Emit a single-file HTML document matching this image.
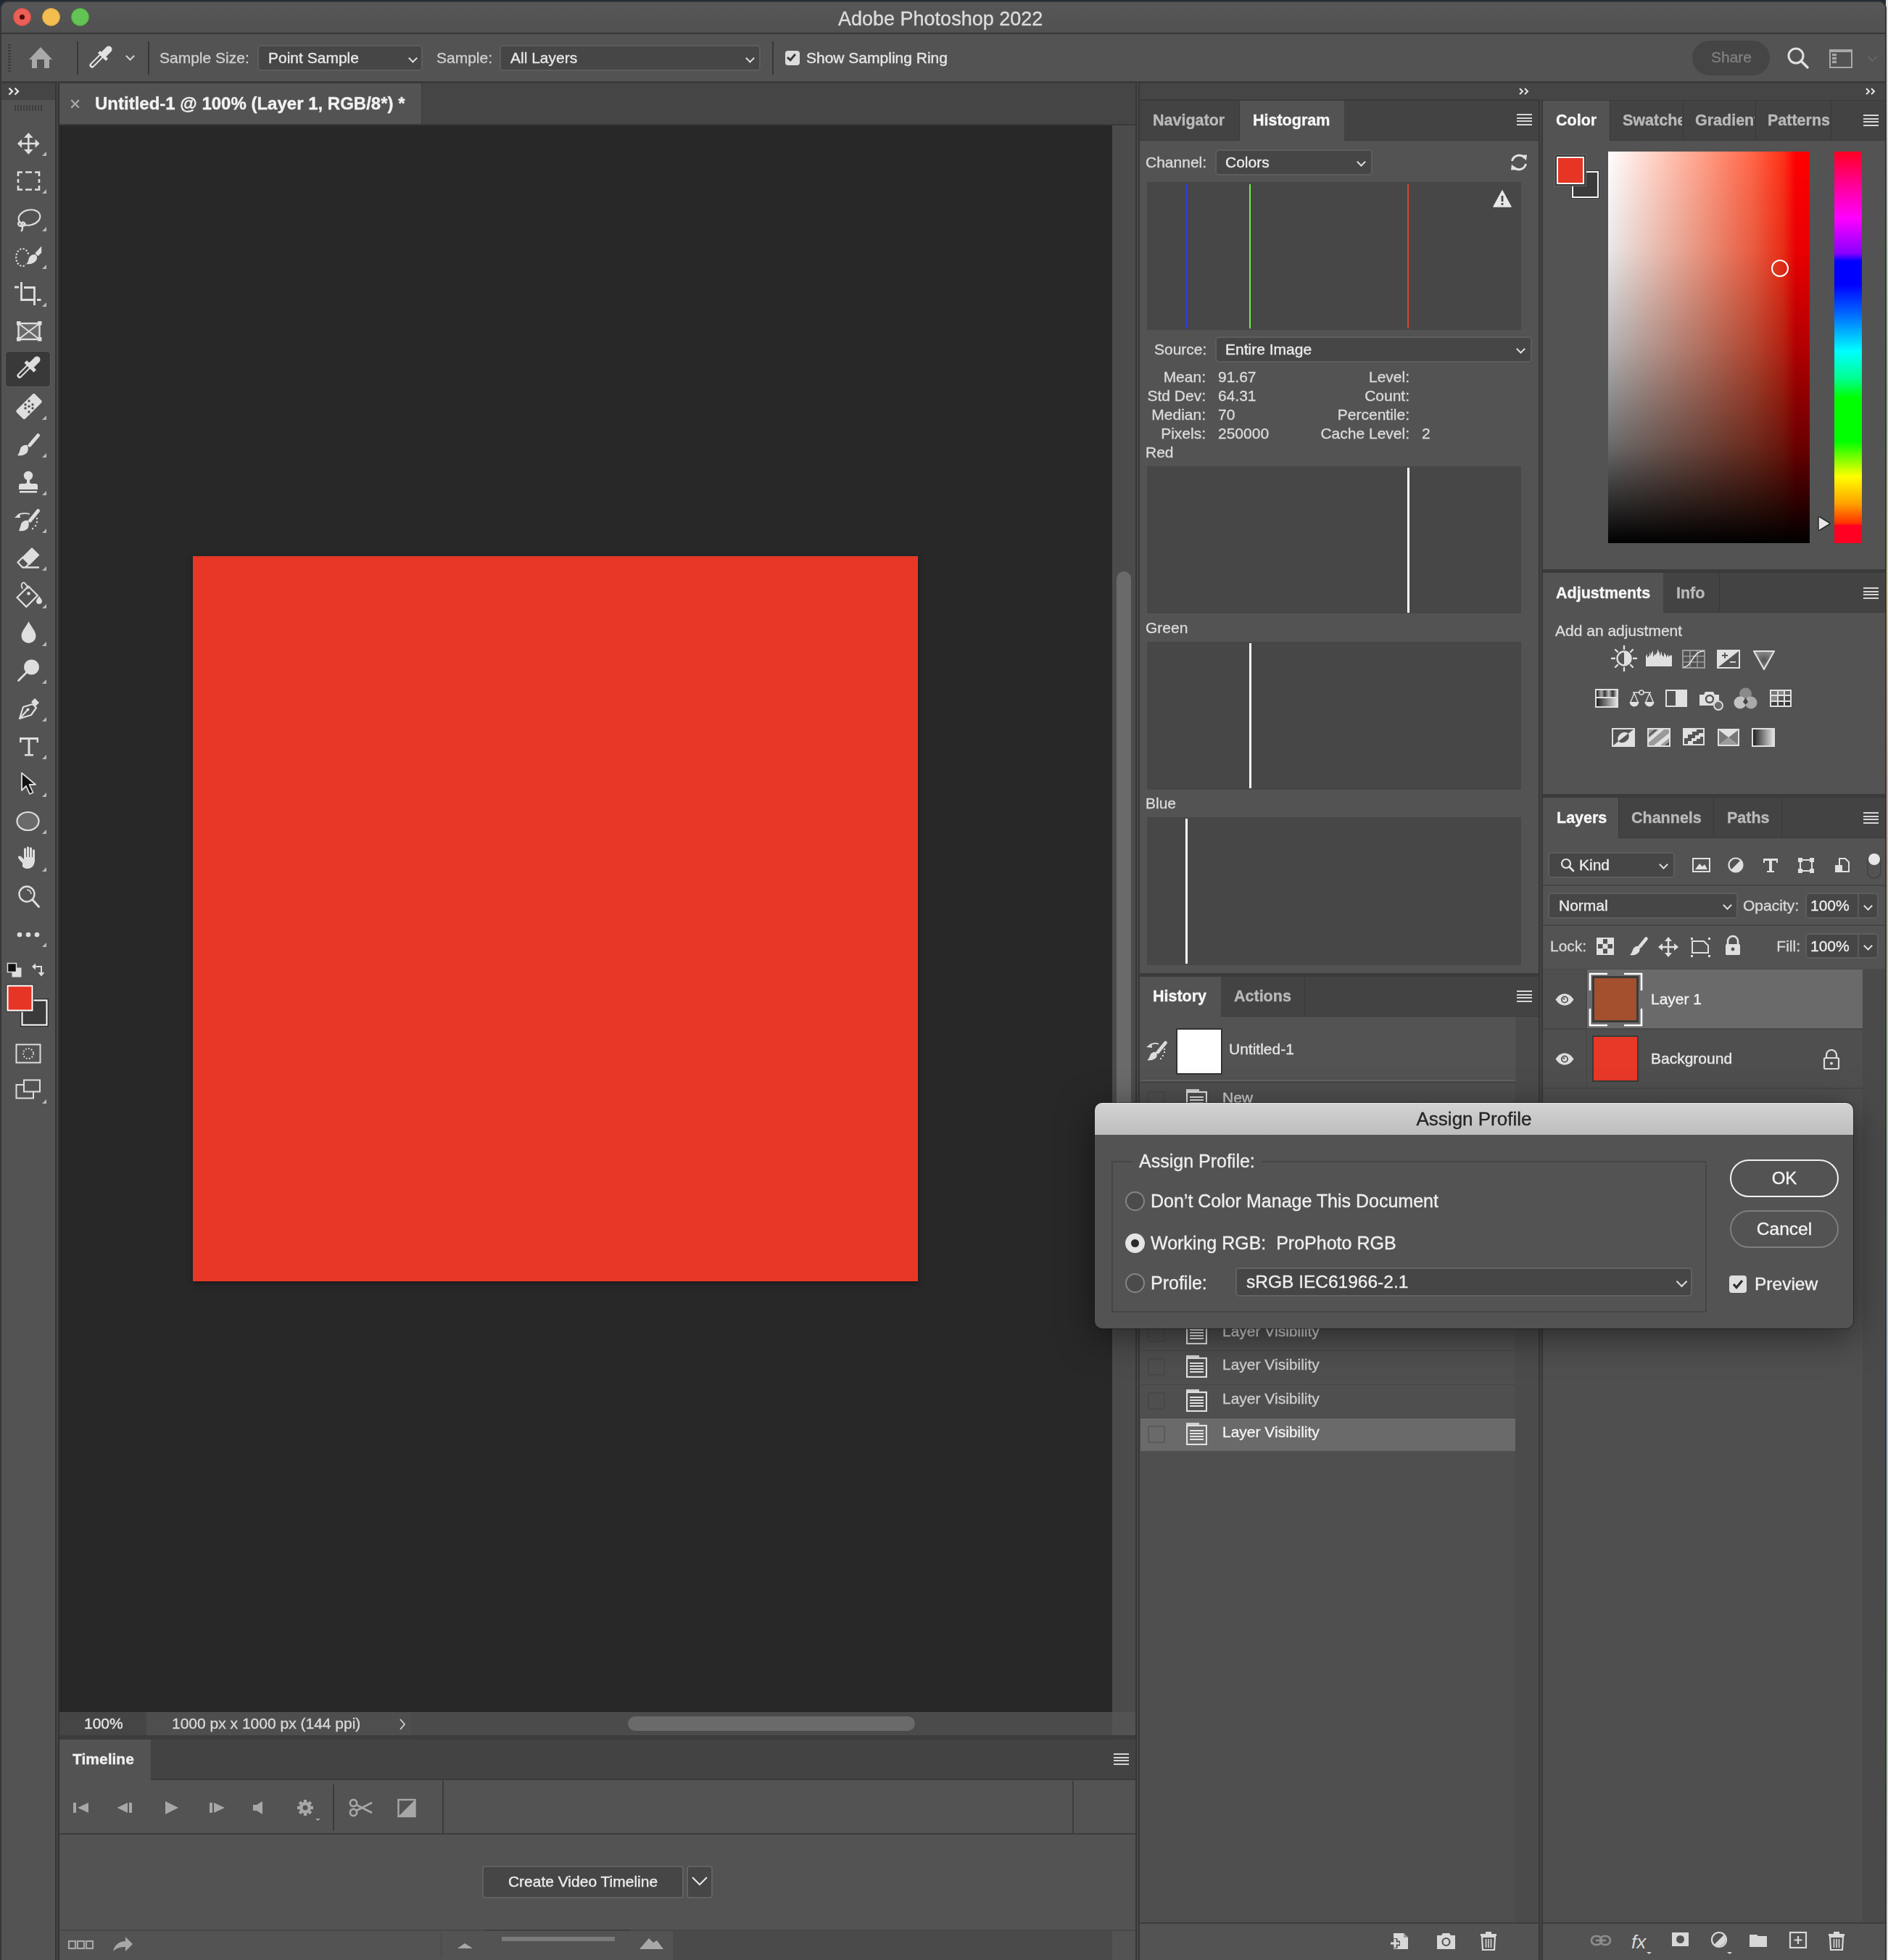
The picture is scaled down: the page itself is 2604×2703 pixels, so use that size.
<!DOCTYPE html>
<html><head><meta charset="utf-8">
<style>
*{margin:0;padding:0;box-sizing:border-box}
html,body{width:2604px;height:2703px;overflow:hidden;background:#1c2833}
body{position:relative;font-family:"Liberation Sans",sans-serif;color:#e4e4e4}
.a{position:absolute}
.t{position:absolute;white-space:nowrap;height:30px;line-height:30px;font-size:21px;will-change:transform;-webkit-text-stroke:0.35px currentColor}
.b{font-weight:bold}
.dd{position:absolute;background:#464646;border:2px solid #5d5d5d;border-radius:5px}
.chev{position:absolute;width:11px;height:11px;border-right:2.5px solid #e0e0e0;border-bottom:2.5px solid #e0e0e0;transform:rotate(45deg)}
.ham{position:absolute;width:30px;height:22px;background:repeating-linear-gradient(#cfcfcf 0 2px,transparent 2px 5px)}
.sep{position:absolute;background:#383838}
</style></head><body>
<div class="a" style="left:2601px;top:0;width:3px;height:2703px;background:linear-gradient(#e8e8e8 0%,#9fc79a 20%,#d9d08a 30%,#cfa3a0 40%,#9fc79a 55%,#a9bde0 70%,#9fc79a 85%,#dddddd 100%)"></div>
<div id="win" class="a" style="left:0;top:1px;width:2602px;height:2702px;background:#535353;border-radius:11px 11px 0 0;overflow:hidden;border:2px solid #373737;border-bottom:none">
<div class="a" style="left:-2px;top:-3px;width:2604px;height:2706px">

<!-- title bar -->
<div class="a" style="left:0;top:0;width:2604px;height:47px;background:linear-gradient(#575757,#515151);border-bottom:2px solid #363636"></div>
<div class="a" style="left:18px;top:11px;width:25px;height:25px;border-radius:50%;background:#ec5f57;border:1px solid #d44d45"></div>
<div class="a" style="left:27px;top:20px;width:7px;height:7px;border-radius:50%;background:#4d0c08"></div>
<div class="a" style="left:58px;top:11px;width:25px;height:25px;border-radius:50%;background:#f3bd4f;border:1px solid #d9a33b"></div>
<div class="a" style="left:98px;top:11px;width:25px;height:25px;border-radius:50%;background:#62c454;border:1px solid #4fa940"></div>
<div class="t" style="left:1156px;top:11px;font-size:27px;color:#dcdcdc">Adobe Photoshop 2022</div>

<!-- options bar -->
<div class="a" style="left:0;top:47px;width:2604px;height:65px;background:#535353"></div>
<div class="sep" style="left:0;top:112px;width:2601px;height:3px;background:#3a3a3a"></div>

<!-- left toolbar -->
<div class="a" style="left:0;top:115px;width:76px;height:2588px;background:#535353"></div>
<div class="a" style="left:0;top:115px;width:76px;height:23px;background:#454545"></div>
<div class="sep" style="left:76px;top:115px;width:6px;height:2588px;background:#383838;border-left:2px solid #363636;border-right:2px solid #333"></div><div class="sep" style="left:78px;top:115px;width:2px;height:2588px;background:#474747"></div>

<!-- document tab bar -->
<div class="a" style="left:82px;top:115px;width:1484px;height:56px;background:#454545"></div>
<div class="a" style="left:82px;top:115px;width:500px;height:56px;background:#535353;border-right:1px solid #3d3d3d"></div>
<div class="sep" style="left:82px;top:171px;width:1484px;height:2px;background:#393939"></div>
<!-- canvas -->
<div class="a" style="left:82px;top:173px;width:1452px;height:2188px;background:#282828"></div>
<div class="a" style="left:266px;top:767px;width:1000px;height:1000px;background:#e83726;box-shadow:0 3px 8px rgba(0,0,0,.35)"></div>
<!-- v scrollbar -->
<div class="a" style="left:1534px;top:173px;width:32px;height:2188px;background:#4b4b4b"></div>
<div class="a" style="left:1540px;top:788px;width:20px;height:912px;background:#6a6a6a;border-radius:10px"></div>
<!-- status bar -->
<div class="a" style="left:82px;top:2361px;width:1484px;height:32px;background:#4b4b4b"></div>
<div class="a" style="left:82px;top:2361px;width:120px;height:32px;background:#454545"></div>
<div class="a" style="left:202px;top:2361px;width:365px;height:32px;background:#4e4e4e"></div>
<div class="a" style="left:1534px;top:2361px;width:32px;height:32px;background:#535353"></div>
<div class="a" style="left:866px;top:2367px;width:396px;height:20px;background:#6a6a6a;border-radius:10px"></div>
<div class="sep" style="left:82px;top:2393px;width:1484px;height:6px;background:#3c3c3c"></div>

<!-- timeline -->
<div class="a" style="left:82px;top:2399px;width:1484px;height:55px;background:#434343"></div>
<div class="a" style="left:82px;top:2399px;width:126px;height:56px;background:#535353"></div>
<div class="sep" style="left:208px;top:2453px;width:1358px;height:2px;background:#3a3a3a"></div>
<div class="sep" style="left:82px;top:2528px;width:1484px;height:2px;background:#3d3d3d"></div>
<div class="a" style="left:928px;top:2662px;width:606px;height:41px;background:#4a4a4a"></div>
<div class="sep" style="left:82px;top:2661px;width:1484px;height:2px;background:#474747"></div>

<!-- divider between doc and panels -->
<div class="sep" style="left:1566px;top:115px;width:6px;height:2588px;background:#383838"></div><div class="sep" style="left:1568px;top:115px;width:2px;height:2588px;background:#474747"></div>

<!-- panel column 1 -->
<div class="a" style="left:1572px;top:115px;width:552px;height:23px;background:#454545"></div>

<div class="a" style="left:1572px;top:139px;width:552px;height:55px;background:#434343"></div>
<div class="a" style="left:1710px;top:139px;width:144px;height:55px;background:#535353"></div>
<div class="sep" style="left:1709px;top:139px;width:1px;height:55px;background:#3a3a3a"></div>
<div class="sep" style="left:1572px;top:1342px;width:552px;height:5px;background:#3b3b3b"></div>
<div class="a" style="left:1572px;top:1347px;width:552px;height:55px;background:#434343"></div>
<div class="a" style="left:1572px;top:1347px;width:112px;height:55px;background:#535353"></div>
<div class="sep" style="left:1799px;top:1347px;width:1px;height:55px;background:#3a3a3a"></div>
<div class="a" style="left:1572px;top:1491px;width:518px;height:1160px;background:#4f4f4f"></div>
<div class="a" style="left:2090px;top:1402px;width:32px;height:1249px;background:#4b4b4b"></div>
<div class="sep" style="left:1572px;top:2651px;width:552px;height:2px;background:#3d3d3d"></div>

<div class="sep" style="left:2122px;top:138px;width:6px;height:2565px;background:#383838"></div><div class="sep" style="left:2124px;top:138px;width:2px;height:2565px;background:#474747"></div>
<div class="sep" style="left:1572px;top:137px;width:1029px;height:2px;background:#3a3a3a"></div>

<!-- panel column 2 -->
<div class="a" style="left:2124px;top:115px;width:477px;height:23px;background:#454545"></div>

<div class="a" style="left:2128px;top:139px;width:473px;height:55px;background:#434343"></div>
<div class="a" style="left:2128px;top:139px;width:92px;height:55px;background:#535353"></div>
<div class="sep" style="left:2128px;top:785px;width:473px;height:5px;background:#3b3b3b"></div>
<div class="a" style="left:2128px;top:790px;width:473px;height:55px;background:#434343"></div>
<div class="a" style="left:2128px;top:790px;width:166px;height:55px;background:#535353"></div>
<div class="sep" style="left:2128px;top:1095px;width:473px;height:5px;background:#3b3b3b"></div>
<div class="a" style="left:2128px;top:1100px;width:473px;height:56px;background:#434343"></div>
<div class="a" style="left:2128px;top:1100px;width:104px;height:56px;background:#535353"></div>
<div class="a" style="left:2128px;top:1336px;width:441px;height:1315px;background:#4f4f4f"></div>
<div class="a" style="left:2569px;top:1336px;width:32px;height:1315px;background:#4a4a4a"></div>
<div class="sep" style="left:2128px;top:2651px;width:473px;height:2px;background:#3d3d3d"></div>

<!-- CONTENT -->
<div class="sep" style="left:1572px;top:193px;width:138px;height:1px;background:#3a3a3a"></div>
<div class="sep" style="left:1854px;top:193px;width:268px;height:1px;background:#3a3a3a"></div>
<div class="sep" style="left:1684px;top:1401px;width:438px;height:1px;background:#3a3a3a"></div>
<div class="sep" style="left:2220px;top:193px;width:381px;height:1px;background:#3a3a3a"></div>
<div class="sep" style="left:2294px;top:844px;width:307px;height:1px;background:#3a3a3a"></div>
<div class="sep" style="left:2232px;top:1155px;width:369px;height:1px;background:#3a3a3a"></div>


<!-- ===== options bar content ===== -->
<div class="a" style="left:11px;top:61px;width:4px;height:38px;background:repeating-linear-gradient(#3c3c3c 0 2px,transparent 2px 4px)"></div>
<svg class="a" style="left:40px;top:65px" width="32" height="30" viewBox="0 0 32 30"><path d="M0 17 L16 0 L32 17 L28 17 L28 29 L21 29 L21 17 L11 17 L11 29 L4 29 L4 17 Z" fill="#a9a9a9"/></svg>
<div class="sep" style="left:106px;top:57px;width:2px;height:46px"></div>
<svg class="a" style="left:123px;top:63px" width="34" height="33" viewBox="0 0 34 33"><path d="M4 27 L20 11" stroke="#e2e2e2" stroke-width="7" stroke-linecap="round"/><path d="M4.5 26.5 L19 12" stroke="#535353" stroke-width="3" stroke-linecap="round"/><path d="M15 7 L26 18 L23 21 L12 10 Z" fill="#e2e2e2"/><path d="M20 12 L27 5" stroke="#e2e2e2" stroke-width="9" stroke-linecap="round"/></svg>
<div class="chev" style="left:175px;top:73px;width:9px;height:9px;border-width:2px;border-color:#d5d5d5"></div>
<div class="sep" style="left:204px;top:57px;width:2px;height:46px"></div>
<div class="t" style="left:220px;top:65px;font-size:21px;color:#cfcfcf">Sample Size:</div>
<div class="dd" style="left:355px;top:62px;width:228px;height:36px"></div>
<div class="t" style="left:370px;top:65px;font-size:21px;color:#e8e8e8">Point Sample</div>
<div class="chev" style="left:565px;top:76px;width:9px;height:9px;border-width:2px"></div>
<div class="t" style="left:602px;top:65px;font-size:21px;color:#cfcfcf">Sample:</div>
<div class="dd" style="left:689px;top:62px;width:360px;height:36px"></div>
<div class="t" style="left:704px;top:65px;font-size:21px;color:#e8e8e8">All Layers</div>
<div class="chev" style="left:1030px;top:76px;width:9px;height:9px;border-width:2px"></div>
<div class="sep" style="left:1065px;top:57px;width:2px;height:46px"></div>
<div class="a" style="left:1083px;top:70px;width:20px;height:20px;background:#dcdcdc;border-radius:4px"></div>
<div class="a" style="left:1088px;top:72px;width:7px;height:12px;border-right:3px solid #3a3a3a;border-bottom:3px solid #3a3a3a;transform:rotate(40deg)"></div>
<div class="t" style="left:1112px;top:65px;font-size:21px;color:#e8e8e8">Show Sampling Ring</div>
<div class="a" style="left:2334px;top:56px;width:107px;height:48px;border-radius:24px;background:#454545"></div>
<div class="t" style="left:2360px;top:64px;font-size:21px;color:#808080">Share</div>
<svg class="a" style="left:2464px;top:64px" width="32" height="32" viewBox="0 0 32 32"><circle cx="13" cy="13" r="10" fill="none" stroke="#e0e0e0" stroke-width="3"/><path d="M20 20 L29 29" stroke="#e0e0e0" stroke-width="3.5" stroke-linecap="round"/></svg>
<div class="a" style="left:2523px;top:68px;width:32px;height:26px;border:2px solid #a8a8a8;border-top-width:4px"></div>
<div class="a" style="left:2527px;top:74px;width:6px;height:14px;background:repeating-linear-gradient(#a8a8a8 0 3px,#606060 3px 5px)"></div>
<div class="chev" style="left:2578px;top:74px;width:9px;height:9px;border-width:1.5px;border-color:#777"></div>

<!-- ===== toolbar header / doc tab ===== -->

<div class="a" style="left:20px;top:145px;width:38px;height:8px;background:repeating-linear-gradient(90deg,#3e3e3e 0 2px,transparent 2px 4px)"></div>
<div class="t" style="left:96px;top:128px;font-size:26px;color:#aaaaaa">&#215;</div>
<div class="t b" style="left:131px;top:128px;font-size:24px;color:#f2f2f2">Untitled-1 @ 100% (Layer 1, RGB/8*) *</div>

<!-- toolbar icons -->
<svg class="a" style="left:0;top:0" width="80" height="1530" viewBox="0 0 80 1530">
<g fill="#b9b9b9">
<path d="M58 215H64V209Z"/><path d="M58 267H64V261Z"/><path d="M58 319H64V313Z"/><path d="M58 371H64V365Z"/><path d="M58 423H64V417Z"/>
<path d="M58 527H64V521Z"/><path d="M58 579H64V573Z"/><path d="M58 631H64V625Z"/><path d="M58 683H64V677Z"/><path d="M58 735H64V729Z"/>
<path d="M58 787H64V781Z"/><path d="M58 839H64V833Z"/><path d="M58 891H64V885Z"/><path d="M58 943H64V937Z"/><path d="M58 995H64V989Z"/>
<path d="M58 1047H64V1041Z"/><path d="M58 1099H64V1093Z"/><path d="M58 1150H64V1144Z"/><path d="M58 1202H64V1196Z"/><path d="M58 1306H64V1300Z"/><path d="M58 1522H64V1516Z"/>
</g>
<g fill="#dedede" stroke="none">
<!-- move -->
<path d="M38 186h2.6v24h-2.6z M27 196.7h24v2.6h-24z"/>
<path d="M33 190L39.3 183L45.6 190Z M33 206L39.3 213L45.6 206Z M30 192L24 198L30 204Z M48.6 192L54.6 198L48.6 204Z"/>
</g>
<g fill="none" stroke="#dedede" stroke-width="2.6">
<!-- marquee -->
<path d="M25 243V237.5H31 M35 237.5H44 M48 237.5H54V243 M54 247V252 M54 256V261.5H48 M44 261.5H35 M31 261.5H25V256 M25 252V247"/>
<!-- lasso -->
<ellipse cx="40.5" cy="300" rx="15" ry="10.5" transform="rotate(-12 40.5 300)" stroke-width="2.2"/>
<path d="M28 305c-5 3-3 7 2 7c5 0 6-3 3-5c-3-2-5 2-3 5c2 3 1 5-1 7" stroke-width="2.2"/>
<!-- quick select dotted -->
<clipPath id="qsClip"><path d="M15 335H45V351H35.5V372H15Z"/></clipPath><ellipse cx="31" cy="355" rx="8.8" ry="12" stroke-dasharray="2.2 2.3" stroke-width="2.2" clip-path="url(#qsClip)"/>
<!-- crop -->
<path d="M20 396H26 M29.5 389V413.5H47 M33 396.5H47.5V421 M51 413.5H56.5" stroke-width="2.8"/>
<!-- frame -->
<rect x="25.5" y="446" width="29" height="22" fill="#6a6a6a" stroke-width="2.4"/>
<path d="M25.5 446L54.5 468M54.5 446L25.5 468" stroke-width="2"/>
</g>
<g fill="#dedede">
<rect x="23" y="443" width="5.5" height="5.5"/><rect x="52" y="443" width="5.5" height="5.5"/><rect x="23" y="465" width="5.5" height="5.5"/><rect x="52" y="465" width="5.5" height="5.5"/>
<!-- quick select brush -->
<path d="M57.2 339.5V348.5L52.5 353.2L48.3 349.3Z"/><path d="M49.5 351.5C45 350 40.5 353 39.5 357.5C39 360.5 38 362.5 36.3 364.2C42 365 48 362.5 50.3 358.5C51.5 356 51.5 353.5 49.5 351.5Z"/>
</g>
<!-- eyedropper selected bg -->
<rect x="7.5" y="484.5" width="62" height="49" rx="5" fill="#393939" stroke="#5c5c5c" stroke-width="1"/>
<g>
<path d="M27 518L42 503" stroke="#dedede" stroke-width="7" stroke-linecap="round"/>
<path d="M27.5 517.5L41.5 503.5" stroke="#393939" stroke-width="3" stroke-linecap="round"/>
<path d="M37 497L50 510L46.5 513.5L33.5 500.5Z" fill="#dedede"/>
<path d="M43 504L51 496" stroke="#dedede" stroke-width="9" stroke-linecap="round"/>
</g>
<g fill="#dedede">
<!-- healing -->
<g transform="rotate(-45 40 560.5)"><rect x="22" y="552" width="36" height="17" rx="3"/></g>
<g fill="#535353"><circle cx="35" cy="558" r="1.7"/><circle cx="40" cy="553" r="1.7"/><circle cx="45" cy="558" r="1.7"/><circle cx="35" cy="563" r="1.7"/><circle cx="40" cy="568" r="1.7"/><circle cx="45" cy="563" r="1.7"/><circle cx="40" cy="560.5" r="1.7"/></g>
<!-- brush -->
<path d="M52.5 600.5L41 614" stroke="#dedede" stroke-width="5" stroke-linecap="round"/>
<path d="M38 614c-4-1-9 1-10 5c-1 4-2 7-4 9c6 1 12-1 14-5c1-2 1-6 0-9z"/>
<!-- stamp -->
<circle cx="39" cy="656" r="6.2"/>
<path d="M37 661h4v4c0 1 1 2 3 2h5c2 0 3 1 3 3v5h-26v-5c0-2 1-3 3-3h5c2 0 3-1 3-2z"/>
<rect x="27" y="677" width="24" height="2.6"/>
<!-- history brush -->
<path d="M52.5 704.5L41.5 718" stroke="#dedede" stroke-width="5" stroke-linecap="round"/>
<path d="M39 718c-4-1-9 1-10 5c-1 4-2 6-3 9c6 1 12-1 13-5c1-2 1-6 0-9z"/>
<path d="M20 714L27 708L28 714Z"/>
<path d="M24 711c4-3 10-4 17-2" stroke="#dedede" stroke-width="1.8" fill="none"/>
<circle cx="51" cy="715" r="1.2"/><circle cx="51" cy="720" r="1.2"/><circle cx="49" cy="725" r="1.2"/><circle cx="45" cy="729" r="1.2"/>
</g>
<!-- eraser -->
<path d="M44 756L53.5 765.5L40.5 778.5L31 769Z" fill="#dedede" stroke="#dedede" stroke-width="1.5" stroke-linejoin="round"/>
<path d="M32 768L24.5 775.5L31 782.5H54M35 782.5L41 776.5" fill="none" stroke="#dedede" stroke-width="2.3" stroke-linejoin="round"/>
<!-- bucket -->
<g transform="rotate(-45 37 822)"><rect x="26" y="814" width="22" height="18" fill="none" stroke="#dedede" stroke-width="2.2"/></g>
<path d="M31 812c-3-6 0-10 3-8c2 2 4 5 5 8" fill="none" stroke="#dedede" stroke-width="1.8"/>
<circle cx="39.5" cy="818.5" r="2.3" fill="#dedede"/>
<path d="M54 822c2 3 4 5 4 7a4 4 0 0 1-8 0c0-2 2-4 4-7z" fill="#dedede"/>
<!-- blur drop -->
<path d="M39.5 857c3 7 10 13 10 20a10 10 0 0 1-20 0c0-7 7-13 10-20z" fill="#dedede"/>
<!-- dodge -->
<circle cx="43.5" cy="920" r="10.5" fill="#dedede"/>
<path d="M37 927L25.5 938.5" stroke="#dedede" stroke-width="2.8" stroke-linecap="round"/>
<!-- pen -->
<g fill="none" stroke="#dedede" stroke-width="2.2" stroke-linejoin="round">
<path d="M45 971L50 976L43 986L27 991L32 975Z"/>
<path d="M28 990L38 979"/>
</g>
<path d="M43 968L48 963L54 969L49 974Z" fill="#dedede"/>
<circle cx="38.5" cy="978.5" r="2" fill="#dedede"/>
<!-- type -->
<path d="M27 1017H53V1024H50.5V1020H41.5V1040H46V1042.6H34V1040H38.5V1020H29.5V1024H27Z" fill="#dedede"/>
<!-- path selection -->
<path d="M30 1066L30 1090L36 1084L41 1095L45.5 1093L40.5 1082L49 1082Z" fill="#111" stroke="#dedede" stroke-width="1.8" stroke-linejoin="round"/>
<!-- ellipse -->
<ellipse cx="38.5" cy="1132.5" rx="15" ry="12.5" fill="#6a6a6a" stroke="#dedede" stroke-width="2.2"/>
<!-- hand -->
<path d="M31 1190c-3-3-6-6-6-8c0-2 3-2 5 0l3 3v-14c0-2 3-2 3 0v11h1v-13c0-2 3-2 3 0v13h1v-12c0-2 3-2 3 0v12h1v-9c0-2 3-2 3 0v13c0 7-4 12-10 12c-4 0-6-2-7-3z" fill="#dedede"/>
<!-- zoom -->
<circle cx="37" cy="1233" r="10.5" fill="none" stroke="#dedede" stroke-width="2.4"/>
<path d="M37 1227a6 6 0 0 1 6 6" fill="none" stroke="#dedede" stroke-width="1.6"/>
<path d="M45 1241L53.5 1250.5" stroke="#dedede" stroke-width="3" stroke-linecap="round"/>
<!-- dots -->
<g fill="#dedede"><circle cx="27" cy="1289" r="3.3"/><circle cx="39" cy="1289" r="3.3"/><circle cx="51" cy="1289" r="3.3"/></g>
<!-- small fg/bg -->
<rect x="16.5" y="1334.5" width="13" height="13" fill="#dedede"/>
<rect x="10.5" y="1328.5" width="12" height="12" fill="#111" stroke="#dedede" stroke-width="1.5"/>
<!-- swap -->
<path d="M47 1333H57V1343" fill="none" stroke="#dedede" stroke-width="2"/>
<path d="M44 1333L49 1328.5V1337.5Z M52.5 1341H61.5L57 1346.5Z" fill="#dedede"/>
<!-- big swatches -->
<rect x="28.5" y="1377.5" width="38" height="38" fill="#3a3a3a" stroke="#2f2f2f" stroke-width="1"/>
<rect x="30.5" y="1379.5" width="34" height="34" fill="#3b3b3b" stroke="#ffffff" stroke-width="2"/>
<rect x="8.5" y="1357.5" width="38" height="38" fill="#2f2f2f"/>
<rect x="10.5" y="1359.5" width="34" height="34" fill="#e63524" stroke="#ffffff" stroke-width="2"/>
<!-- quick mask -->
<rect x="22.5" y="1440.5" width="33" height="25" fill="none" stroke="#dedede" stroke-width="2"/>
<circle cx="39" cy="1453" r="7" fill="none" stroke="#dedede" stroke-width="2" stroke-dasharray="1.8 2.3"/>
<!-- screen mode -->
<rect x="33" y="1489.5" width="22" height="16" fill="#535353" stroke="#dedede" stroke-width="2"/>
<path d="M33 1496H22.5V1514.5H46V1505.5" fill="none" stroke="#dedede" stroke-width="2"/>
</svg>

<!-- ===== status bar ===== -->
<div class="t" style="left:116px;top:2362px;font-size:21px;color:#e6e6e6">100%</div>
<div class="t" style="left:237px;top:2362px;font-size:21px;color:#d8d8d8">1000 px x 1000 px (144 ppi)</div>
<svg class="a" style="left:549px;top:2369px" width="12" height="18" viewBox="0 0 12 18"><path d="M3 2L9 9L3 16" fill="none" stroke="#d0d0d0" stroke-width="1.8"/></svg>
<!-- ===== timeline ===== -->
<div class="t b" style="left:100px;top:2411px;font-size:21px;color:#f0f0f0">Timeline</div>
<div class="ham" style="left:1536px;top:2418px;width:21px;height:16px;background:repeating-linear-gradient(#d6d6d6 0 2px,transparent 2px 4.6px)"></div>
<div class="sep" style="left:1479px;top:2456px;width:2px;height:73px;background:#3c3c3c"></div>
<svg class="a" style="left:80px;top:2440px" width="560" height="263" viewBox="80 2440 560 263">
<g fill="#a7a7a7">
<rect x="101" y="2486" width="4" height="14"/><path d="M122 2486V2500L107 2493Z"/>
<path d="M176 2486V2500L161.5 2493Z"/><rect x="178" y="2486" width="4" height="14"/>
<path d="M228 2484V2502L246 2493Z"/>
<rect x="289" y="2486" width="4" height="14"/><path d="M295 2486V2500L310 2493Z"/>
<path d="M349 2489H354L362 2484V2502L354 2497H349Z"/>
<path d="M435 2508H442L438.5 2511Z"/>
<rect x="549.5" y="2482" width="23" height="23" fill="none" stroke="#a7a7a7" stroke-width="2.4"/>
<path d="M550 2504.5L572 2482.5V2504.5Z"/>
</g>
<g transform="translate(421 2493)">
<circle r="8" fill="#a7a7a7"/>
<g fill="#a7a7a7"><rect x="-2.2" y="-11" width="4.4" height="22"/><rect x="-2.2" y="-11" width="4.4" height="22" transform="rotate(45)"/><rect x="-2.2" y="-11" width="4.4" height="22" transform="rotate(90)"/><rect x="-2.2" y="-11" width="4.4" height="22" transform="rotate(135)"/></g>
<circle r="3.5" fill="#535353"/>
</g>
<g fill="none" stroke="#a7a7a7" stroke-width="2.6">
<circle cx="487.5" cy="2486.5" r="4.6"/><circle cx="487.5" cy="2499.5" r="4.6"/>
<path d="M491.5 2489L513 2500M491.5 2497L513 2486"/>
</g>
<g fill="none" stroke="#a7a7a7" stroke-width="2.2">
<rect x="95" y="2677" width="9" height="10"/><rect x="107" y="2677" width="9" height="10"/><rect x="119" y="2677" width="9" height="10"/>
</g>
<path d="M156 2691c2-9 9-14 17-14v-6l10 10l-10 10v-6c-8 0-13 2-17 6z" fill="#a7a7a7"/>
</svg>
<div class="sep" style="left:459px;top:2461px;width:2px;height:64px;background:#3a3a3a"></div>
<div class="sep" style="left:610px;top:2456px;width:2px;height:73px;background:#3c3c3c"></div>
<div class="sep" style="left:608px;top:2666px;width:1px;height:34px;background:#444"></div>
<div class="a" style="left:665px;top:2573px;width:278px;height:45px;background:#464646;border:2px solid #626262;border-radius:4px"></div>
<div class="t" style="left:665px;top:2580px;width:278px;text-align:center;font-size:21px;color:#ececec">Create Video Timeline</div>
<div class="a" style="left:947px;top:2573px;width:36px;height:45px;background:#464646;border:2px solid #626262;border-radius:4px"></div>
<svg class="a" style="left:953px;top:2586px" width="24" height="16" viewBox="0 0 24 16"><path d="M2 3L12 13L22 3" fill="none" stroke="#e8e8e8" stroke-width="2"/></svg>
<svg class="a" style="left:620px;top:2660px" width="310" height="43" viewBox="620 2660 310 43">
<path d="M631 2687L641 2680L652 2687Z" fill="#a8a8a8"/>
<rect x="692" y="2671" width="156" height="6" fill="#7a7a7a"/>
<path d="M882 2688L895 2673L901 2679L906 2676L915 2688Z" fill="#a8a8a8"/>
<rect x="669" y="2661" width="200" height="2" fill="#3e3e3e"/>
</svg>

<!-- ===== panel col1 header ===== -->
<svg class="a" style="left:2094px;top:120px" width="16" height="12" viewBox="0 0 16 12"><path d="M2 2L6 6L2 10M9 2L13 6L9 10" fill="none" stroke="#e6e6e6" stroke-width="2"/></svg>
<svg class="a" style="left:2572px;top:120px" width="16" height="12" viewBox="0 0 16 12"><path d="M2 2L6 6L2 10M9 2L13 6L9 10" fill="none" stroke="#e6e6e6" stroke-width="2"/></svg>
<svg class="a" style="left:10px;top:119px" width="18" height="14" viewBox="0 0 18 14"><path d="M2.5 2.5L7 7L2.5 11.5M10.5 2.5L15 7L10.5 11.5" fill="none" stroke="#e6e6e6" stroke-width="2.4"/></svg>
<!-- ===== histogram panel ===== -->
<div class="t b" style="left:1590px;top:151px;font-size:21.5px;color:#b9b9b9">Navigator</div>
<div class="t b" style="left:1728px;top:151px;font-size:21.5px;color:#f7f7f7">Histogram</div>
<div class="ham" style="left:2092px;top:157px;width:21px;height:16px;background:repeating-linear-gradient(#d6d6d6 0 2px,transparent 2px 4.6px)"></div>
<div class="t" style="left:1580px;top:209px;color:#dadada">Channel:</div>
<div class="dd" style="left:1676px;top:206px;width:217px;height:36px"></div>
<div class="t" style="left:1690px;top:209px;color:#ececec">Colors</div>
<div class="chev" style="left:1873px;top:219px;width:9px;height:9px;border-width:2px"></div>
<svg class="a" style="left:2081px;top:210px" width="28" height="28" viewBox="0 0 28 28"><g fill="none" stroke="#e2e2e2" stroke-width="3"><path d="M4.5 12A10 10 0 0 1 22 8"/><path d="M23.5 16A10 10 0 0 1 6 20"/></g><path d="M17 4L25 3.5L24 11.5Z M11 24L3 24.5L4 16.5Z" fill="#e2e2e2"/></svg>
<div class="a" style="left:1582px;top:251px;width:516px;height:204px;background:#474747"></div>
<div class="a" style="left:1635px;top:254px;width:2px;height:199px;background:#2b3de8"></div>
<div class="a" style="left:1723px;top:254px;width:2px;height:199px;background:#74ee45"></div>
<div class="a" style="left:1941px;top:254px;width:2px;height:199px;background:#d8452f"></div>
<svg class="a" style="left:2059px;top:262px" width="26" height="24" viewBox="0 0 26 24"><path d="M13 1L25 23H1Z" fill="#e8e8e8" stroke="#e8e8e8" stroke-width="1.5" stroke-linejoin="round"/><rect x="11.6" y="8" width="2.8" height="8" fill="#474747"/><rect x="11.6" y="18" width="2.8" height="2.8" fill="#474747"/></svg>
<div class="t" style="left:1592px;top:467px;color:#dadada">Source:</div>
<div class="dd" style="left:1676px;top:464px;width:437px;height:36px"></div>
<div class="t" style="left:1690px;top:467px;color:#ececec">Entire Image</div>
<div class="chev" style="left:2093px;top:477px;width:9px;height:9px;border-width:2px"></div>
<div class="t" style="left:1563px;top:505px;width:100px;text-align:right;color:#dadada">Mean:</div>
<div class="t" style="left:1563px;top:531px;width:100px;text-align:right;color:#dadada">Std Dev:</div>
<div class="t" style="left:1563px;top:557px;width:100px;text-align:right;color:#dadada">Median:</div>
<div class="t" style="left:1563px;top:583px;width:100px;text-align:right;color:#dadada">Pixels:</div>
<div class="t" style="left:1680px;top:505px;color:#dadada">91.67</div>
<div class="t" style="left:1680px;top:531px;color:#dadada">64.31</div>
<div class="t" style="left:1680px;top:557px;color:#dadada">70</div>
<div class="t" style="left:1680px;top:583px;color:#dadada">250000</div>
<div class="t" style="left:1784px;top:505px;width:160px;text-align:right;color:#dadada">Level:</div>
<div class="t" style="left:1784px;top:531px;width:160px;text-align:right;color:#dadada">Count:</div>
<div class="t" style="left:1784px;top:557px;width:160px;text-align:right;color:#dadada">Percentile:</div>
<div class="t" style="left:1784px;top:583px;width:160px;text-align:right;color:#dadada">Cache Level:</div>
<div class="t" style="left:1961px;top:583px;color:#dadada">2</div>
<div class="t" style="left:1580px;top:609px;color:#dadada">Red</div>
<div class="a" style="left:1582px;top:643px;width:516px;height:203px;background:#474747"></div>
<div class="a" style="left:1941px;top:645px;width:3px;height:200px;background:#ffffff"></div>
<div class="t" style="left:1580px;top:851px;color:#dadada">Green</div>
<div class="a" style="left:1582px;top:885px;width:516px;height:204px;background:#474747"></div>
<div class="a" style="left:1723px;top:887px;width:3px;height:200px;background:#ffffff"></div>
<div class="t" style="left:1580px;top:1093px;color:#dadada">Blue</div>
<div class="a" style="left:1582px;top:1127px;width:516px;height:204px;background:#474747"></div>
<div class="a" style="left:1635px;top:1129px;width:3px;height:200px;background:#ffffff"></div>

<!-- ===== history panel ===== -->
<div class="t b" style="left:1590px;top:1359px;font-size:21.5px;color:#f7f7f7">History</div>
<div class="t b" style="left:1702px;top:1359px;font-size:21.5px;color:#b9b9b9">Actions</div>
<div class="ham" style="left:2092px;top:1366px;width:21px;height:16px;background:repeating-linear-gradient(#d6d6d6 0 2px,transparent 2px 4.6px)"></div>
<svg class="a" style="left:1580px;top:1435px" width="30" height="28" viewBox="0 0 30 28"><path d="M27.5 3L17 16" stroke="#dcdcdc" stroke-width="4.5" stroke-linecap="round"/><path d="M15 16c-4-1-8 1-9 5c-1 3-2 5-4 6c6 1 11-1 13-4c1-2 1-5 0-7z" fill="#dcdcdc"/><path d="M1 9L8 4L9 10Z" fill="#dcdcdc"/><path d="M5 7c4-3 9-4 13-2" fill="none" stroke="#dcdcdc" stroke-width="1.8"/><g fill="#dcdcdc"><rect x="25" y="11" width="2" height="2"/><rect x="25" y="15" width="2" height="2"/><rect x="23" y="20" width="2" height="2"/><rect x="20" y="24" width="2" height="2"/></g></svg>
<div class="a" style="left:1622px;top:1418px;width:64px;height:64px;background:#fff;border:2px solid #333"></div>
<div class="t" style="left:1695px;top:1432px;color:#e2e2e2">Untitled-1</div>
<div class="a" style="left:1573px;top:1489px;width:517px;height:2px;background:#626262"></div>
<div class="a" style="left:1573px;top:1491px;width:517px;height:3px;background:#474747"></div>
<div class="a" style="left:1583px;top:1505px;width:24px;height:24px;border:2px solid #484848;border-radius:2px"></div>
<svg class="a" style="left:1636px;top:1502px" width="29" height="31" viewBox="0 0 29 31"><path d="M0 0H18V4H0Z" fill="#cfcfcf"/><rect x="1" y="4" width="27" height="26" fill="none" stroke="#e2e2e2" stroke-width="2.2"/><g fill="#e2e2e2"><rect x="5" y="10" width="19" height="2"/><rect x="5" y="14" width="19" height="2"/><rect x="5" y="18" width="19" height="2"/><rect x="5" y="22" width="19" height="2"/></g></svg>
<div class="t" style="left:1686px;top:1499px;color:#cdcdcd">New</div>
<div class="a" style="left:1573px;top:1537px;width:517px;height:1px;background:#464646"></div>
<div class="a" style="left:1583px;top:1549px;width:24px;height:24px;border:2px solid #484848;border-radius:2px"></div>
<svg class="a" style="left:1636px;top:1545px" width="29" height="31" viewBox="0 0 29 31"><path d="M0 0H18V4H0Z" fill="#cfcfcf"/><rect x="1" y="4" width="27" height="26" fill="none" stroke="#e2e2e2" stroke-width="2.2"/><g fill="#e2e2e2"><rect x="5" y="10" width="19" height="2"/><rect x="5" y="14" width="19" height="2"/><rect x="5" y="18" width="19" height="2"/><rect x="5" y="22" width="19" height="2"/></g></svg>
<div class="t" style="left:1686px;top:1543px;color:#cdcdcd">Layer Visibility</div>
<div class="a" style="left:1573px;top:1584px;width:517px;height:1px;background:#464646"></div>
<div class="a" style="left:1583px;top:1595px;width:24px;height:24px;border:2px solid #484848;border-radius:2px"></div>
<svg class="a" style="left:1636px;top:1591px" width="29" height="31" viewBox="0 0 29 31"><path d="M0 0H18V4H0Z" fill="#cfcfcf"/><rect x="1" y="4" width="27" height="26" fill="none" stroke="#e2e2e2" stroke-width="2.2"/><g fill="#e2e2e2"><rect x="5" y="10" width="19" height="2"/><rect x="5" y="14" width="19" height="2"/><rect x="5" y="18" width="19" height="2"/><rect x="5" y="22" width="19" height="2"/></g></svg>
<div class="t" style="left:1686px;top:1589px;color:#cdcdcd">Layer Visibility</div>
<div class="a" style="left:1573px;top:1630px;width:517px;height:1px;background:#464646"></div>
<div class="a" style="left:1583px;top:1641px;width:24px;height:24px;border:2px solid #484848;border-radius:2px"></div>
<svg class="a" style="left:1636px;top:1637px" width="29" height="31" viewBox="0 0 29 31"><path d="M0 0H18V4H0Z" fill="#cfcfcf"/><rect x="1" y="4" width="27" height="26" fill="none" stroke="#e2e2e2" stroke-width="2.2"/><g fill="#e2e2e2"><rect x="5" y="10" width="19" height="2"/><rect x="5" y="14" width="19" height="2"/><rect x="5" y="18" width="19" height="2"/><rect x="5" y="22" width="19" height="2"/></g></svg>
<div class="t" style="left:1686px;top:1635px;color:#cdcdcd">Layer Visibility</div>
<div class="a" style="left:1573px;top:1677px;width:517px;height:1px;background:#464646"></div>
<div class="a" style="left:1583px;top:1688px;width:24px;height:24px;border:2px solid #484848;border-radius:2px"></div>
<svg class="a" style="left:1636px;top:1684px" width="29" height="31" viewBox="0 0 29 31"><path d="M0 0H18V4H0Z" fill="#cfcfcf"/><rect x="1" y="4" width="27" height="26" fill="none" stroke="#e2e2e2" stroke-width="2.2"/><g fill="#e2e2e2"><rect x="5" y="10" width="19" height="2"/><rect x="5" y="14" width="19" height="2"/><rect x="5" y="18" width="19" height="2"/><rect x="5" y="22" width="19" height="2"/></g></svg>
<div class="t" style="left:1686px;top:1682px;color:#cdcdcd">Layer Visibility</div>
<div class="a" style="left:1573px;top:1723px;width:517px;height:1px;background:#464646"></div>
<div class="a" style="left:1583px;top:1734px;width:24px;height:24px;border:2px solid #484848;border-radius:2px"></div>
<svg class="a" style="left:1636px;top:1730px" width="29" height="31" viewBox="0 0 29 31"><path d="M0 0H18V4H0Z" fill="#cfcfcf"/><rect x="1" y="4" width="27" height="26" fill="none" stroke="#e2e2e2" stroke-width="2.2"/><g fill="#e2e2e2"><rect x="5" y="10" width="19" height="2"/><rect x="5" y="14" width="19" height="2"/><rect x="5" y="18" width="19" height="2"/><rect x="5" y="22" width="19" height="2"/></g></svg>
<div class="t" style="left:1686px;top:1728px;color:#cdcdcd">Layer Visibility</div>
<div class="a" style="left:1573px;top:1769px;width:517px;height:1px;background:#464646"></div>
<div class="a" style="left:1583px;top:1781px;width:24px;height:24px;border:2px solid #484848;border-radius:2px"></div>
<svg class="a" style="left:1636px;top:1777px" width="29" height="31" viewBox="0 0 29 31"><path d="M0 0H18V4H0Z" fill="#cfcfcf"/><rect x="1" y="4" width="27" height="26" fill="none" stroke="#e2e2e2" stroke-width="2.2"/><g fill="#e2e2e2"><rect x="5" y="10" width="19" height="2"/><rect x="5" y="14" width="19" height="2"/><rect x="5" y="18" width="19" height="2"/><rect x="5" y="22" width="19" height="2"/></g></svg>
<div class="t" style="left:1686px;top:1775px;color:#cdcdcd">Layer Visibility</div>
<div class="a" style="left:1573px;top:1816px;width:517px;height:1px;background:#464646"></div>
<div class="a" style="left:1583px;top:1827px;width:24px;height:24px;border:2px solid #484848;border-radius:2px"></div>
<svg class="a" style="left:1636px;top:1823px" width="29" height="31" viewBox="0 0 29 31"><path d="M0 0H18V4H0Z" fill="#cfcfcf"/><rect x="1" y="4" width="27" height="26" fill="none" stroke="#e2e2e2" stroke-width="2.2"/><g fill="#e2e2e2"><rect x="5" y="10" width="19" height="2"/><rect x="5" y="14" width="19" height="2"/><rect x="5" y="18" width="19" height="2"/><rect x="5" y="22" width="19" height="2"/></g></svg>
<div class="t" style="left:1686px;top:1821px;color:#cdcdcd">Layer Visibility</div>
<div class="a" style="left:1573px;top:1862px;width:517px;height:1px;background:#464646"></div>
<div class="a" style="left:1583px;top:1873px;width:24px;height:24px;border:2px solid #484848;border-radius:2px"></div>
<svg class="a" style="left:1636px;top:1869px" width="29" height="31" viewBox="0 0 29 31"><path d="M0 0H18V4H0Z" fill="#cfcfcf"/><rect x="1" y="4" width="27" height="26" fill="none" stroke="#e2e2e2" stroke-width="2.2"/><g fill="#e2e2e2"><rect x="5" y="10" width="19" height="2"/><rect x="5" y="14" width="19" height="2"/><rect x="5" y="18" width="19" height="2"/><rect x="5" y="22" width="19" height="2"/></g></svg>
<div class="t" style="left:1686px;top:1867px;color:#cdcdcd">Layer Visibility</div>
<div class="a" style="left:1573px;top:1909px;width:517px;height:1px;background:#464646"></div>
<div class="a" style="left:1583px;top:1920px;width:24px;height:24px;border:2px solid #484848;border-radius:2px"></div>
<svg class="a" style="left:1636px;top:1916px" width="29" height="31" viewBox="0 0 29 31"><path d="M0 0H18V4H0Z" fill="#cfcfcf"/><rect x="1" y="4" width="27" height="26" fill="none" stroke="#e2e2e2" stroke-width="2.2"/><g fill="#e2e2e2"><rect x="5" y="10" width="19" height="2"/><rect x="5" y="14" width="19" height="2"/><rect x="5" y="18" width="19" height="2"/><rect x="5" y="22" width="19" height="2"/></g></svg>
<div class="t" style="left:1686px;top:1914px;color:#cdcdcd">Layer Visibility</div>
<div class="a" style="left:1573px;top:1955px;width:517px;height:46px;background:#6a6a6a"></div>
<div class="a" style="left:1573px;top:1955px;width:517px;height:1px;background:#464646"></div>
<div class="a" style="left:1583px;top:1966px;width:24px;height:24px;border:2px solid #5a5a5a;border-radius:2px"></div>
<svg class="a" style="left:1636px;top:1962px" width="29" height="31" viewBox="0 0 29 31"><path d="M0 0H18V4H0Z" fill="#cfcfcf"/><rect x="1" y="4" width="27" height="26" fill="none" stroke="#e2e2e2" stroke-width="2.2"/><g fill="#e2e2e2"><rect x="5" y="10" width="19" height="2"/><rect x="5" y="14" width="19" height="2"/><rect x="5" y="18" width="19" height="2"/><rect x="5" y="22" width="19" height="2"/></g></svg>
<div class="t" style="left:1686px;top:1960px;color:#f2f2f2">Layer Visibility</div>
<svg class="a" style="left:1910px;top:2660px" width="160" height="32" viewBox="1910 2660 160 32">
<path d="M1922 2666H1936L1942 2672V2688H1922Z" fill="#d8d8d8"/><path d="M1936 2666V2672H1942" fill="#9a9a9a"/>
<path d="M1924 2673V2687M1917 2680H1931" stroke="#535353" stroke-width="7"/><path d="M1924 2674V2686M1918 2680H1930" stroke="#d8d8d8" stroke-width="3.2"/>
<path d="M1982 2669H1988L1990 2666H1999L2001 2669H2007V2688H1982Z" fill="#d8d8d8"/><circle cx="1994.5" cy="2678" r="5" fill="none" stroke="#535353" stroke-width="2.2"/>
<rect x="2042" y="2667" width="22" height="3" fill="#d8d8d8"/><rect x="2049" y="2664" width="8" height="3" fill="#d8d8d8"/>
<path d="M2044 2671H2062L2061 2689H2045Z" fill="none" stroke="#d8d8d8" stroke-width="2.2"/>
<path d="M2049.5 2674V2686M2053 2674V2686M2056.5 2674V2686" stroke="#d8d8d8" stroke-width="1.6"/>
</svg>

<!-- ===== color panel ===== -->
<div class="sep" style="left:2220px;top:139px;width:1px;height:55px;background:#393939"></div>
<div class="sep" style="left:2321px;top:139px;width:1px;height:55px;background:#393939"></div>
<div class="sep" style="left:2421px;top:139px;width:1px;height:55px;background:#393939"></div>
<div class="sep" style="left:2525px;top:139px;width:1px;height:55px;background:#393939"></div>
<div class="t b" style="left:2146px;top:151px;font-size:21.5px;color:#f7f7f7">Color</div>
<div class="a" style="left:2221px;top:139px;width:99px;height:55px;overflow:hidden"><div class="t b" style="left:17px;top:12px;font-size:21.5px;color:#b9b9b9">Swatches</div></div>
<div class="a" style="left:2322px;top:139px;width:98px;height:55px;overflow:hidden"><div class="t b" style="left:16px;top:12px;font-size:21.5px;color:#b9b9b9">Gradients</div></div>
<div class="t b" style="left:2438px;top:151px;font-size:21.5px;color:#b9b9b9">Patterns</div>
<div class="ham" style="left:2570px;top:158px;width:21px;height:16px;background:repeating-linear-gradient(#d6d6d6 0 2px,transparent 2px 4.6px)"></div>
<div class="a" style="left:2167px;top:235px;width:39px;height:39px;background:#333;"></div>
<div class="a" style="left:2168px;top:236px;width:37px;height:37px;background:#3b3b3b;border:2px solid #f4f4f4"></div>
<div class="a" style="left:2144px;top:213px;width:44px;height:44px;background:#3a3a3a;border:1px solid #666"></div>
<div class="a" style="left:2147px;top:216px;width:38px;height:38px;background:#e63524;border:2px solid #f4f4f4"></div>
<div class="a" style="left:2218px;top:209px;width:278px;height:540px;background:linear-gradient(to bottom,rgba(0,0,0,0) 0%,rgba(0,0,0,.09) 25%,rgba(0,0,0,.3) 50%,rgba(0,0,0,.58) 75%,rgba(0,0,0,.83) 90%,#000 100%),linear-gradient(to right,#ffffff 0%,#ffd2c6 22%,#ff9c84 48%,#ff6446 72%,#ff3018 87%,#ff0004 93%,#ff0000 100%)"></div>
<div class="a" style="left:2443px;top:358px;width:24px;height:24px;border:2.5px solid #ffffff;border-radius:50%"></div>
<div class="a" style="left:2530px;top:209px;width:38px;height:540px;background:linear-gradient(#ff0022 0%,#ff00aa 10%,#ff00ff 17%,#8a00ff 26%,#0000ff 28%,#0000ff 34%,#0070ff 42%,#00ffff 51%,#00ff90 58%,#00ff00 63%,#00ff00 74%,#aaff00 80%,#ffff00 83%,#ffa000 90%,#ff3000 95%,#ff0022 95.5%,#ff0022 100%)"></div>
<svg class="a" style="left:2506px;top:711px" width="20" height="22" viewBox="0 0 20 22"><path d="M2 3Q2 1 4 2L17 10Q19 11 17 12L4 20Q2 21 2 19Z" fill="#e8e8e8" stroke="#2a2a2a" stroke-width="1.5"/></svg>

<!-- ===== adjustments ===== -->
<div class="sep" style="left:2371px;top:790px;width:1px;height:55px;background:#393939"></div>
<div class="t b" style="left:2146px;top:803px;font-size:21.5px;color:#f7f7f7">Adjustments</div>
<div class="t b" style="left:2312px;top:803px;font-size:21.5px;color:#b9b9b9">Info</div>
<div class="ham" style="left:2570px;top:810px;width:21px;height:16px;background:repeating-linear-gradient(#d6d6d6 0 2px,transparent 2px 4.6px)"></div>
<div class="t" style="left:2145px;top:855px;color:#dcdcdc">Add an adjustment</div>
<svg class="a" style="left:2190px;top:880px" width="290" height="160" viewBox="2190 880 290 160">
<defs>
<linearGradient id="gH" x1="0" x2="1"><stop offset="0" stop-color="#222"/><stop offset=".25" stop-color="#aaa"/><stop offset=".4" stop-color="#333"/><stop offset=".6" stop-color="#bbb"/><stop offset=".8" stop-color="#333"/><stop offset="1" stop-color="#ccc"/></linearGradient>
<linearGradient id="gG" x1="0" x2="1"><stop offset="0" stop-color="#1a1a1a"/><stop offset="1" stop-color="#e8e8e8"/></linearGradient>
<radialGradient id="gV"><stop offset="0" stop-color="#555"/><stop offset="1" stop-color="#8a8a8a"/></radialGradient>
</defs>
<g fill="none" stroke="#e0e0e0" stroke-width="2.4" stroke-linecap="round">
<circle cx="2240" cy="908" r="9.5"/>
<path d="M2240 891V895M2240 921V925M2223 908H2227M2253 908H2257M2228 896L2231 899M2249 917L2252 920M2252 896L2249 899M2231 917L2228 920"/>
</g>
<path d="M2240 898.5A9.5 9.5 0 0 1 2240 917.5Z" fill="#e0e0e0"/>
<path d="M2270 919V905L2272 902V907L2275 904V899L2277 905V902L2280 897V906L2283 901V904L2286 899V895L2289 901V905L2292 898V903L2295 906V900L2298 904V907L2301 902V906L2304 903V905L2306 903V919Z" fill="#e0e0e0"/>
<rect x="2321" y="897" width="30" height="24" fill="none" stroke="#9a9a9a" stroke-width="2"/>
<path d="M2331 897V921M2341 897V921M2321 905H2351M2321 913H2351" stroke="#9a9a9a" stroke-width="1.6"/>
<path d="M2322 920C2334 920 2334 898 2350 898" fill="none" stroke="#e8e8e8" stroke-width="1.6"/>
<rect x="2369" y="897" width="30" height="24" fill="#e0e0e0" stroke="#e0e0e0" stroke-width="2"/>
<path d="M2370 920L2398 898V920Z" fill="#535353"/>
<path d="M2375 904H2383M2379 900V908" stroke="#535353" stroke-width="1.8"/>
<path d="M2386 913H2394" stroke="#e0e0e0" stroke-width="1.8"/>
<path d="M2419 898H2447L2433 923Z" fill="url(#gV)" stroke="#e0e0e0" stroke-width="2.2" stroke-linejoin="round"/>
<rect x="2201" y="951" width="30" height="24" fill="url(#gG)" stroke="#e0e0e0" stroke-width="2"/>
<rect x="2202" y="952" width="28" height="10" fill="url(#gH)"/>
<path d="M2202 962H2230" stroke="#e0e0e0" stroke-width="2"/>
<g fill="#e0e0e0"><path d="M2252 955H2277" stroke="#e0e0e0" stroke-width="1.6"/><circle cx="2264" cy="955" r="3" fill="#535353" stroke="#e0e0e0" stroke-width="1.6"/>
<path d="M2254 956L2249 968M2254 956L2259 968M2275 956L2270 968M2275 956L2280 968" stroke="#e0e0e0" stroke-width="1.4"/>
<path d="M2247.5 968H2260.5A6.5 6.5 0 0 1 2247.5 968Z M2268.5 968H2281.5A6.5 6.5 0 0 1 2268.5 968Z"/></g>
<rect x="2297" y="951" width="30" height="24" fill="#e0e0e0"/><rect x="2299" y="953" width="12" height="20" fill="#535353"/>
<path d="M2344 958H2350L2352 954H2363L2365 958H2371V973H2344Z" fill="#e0e0e0"/>
<circle cx="2358" cy="964" r="5" fill="none" stroke="#535353" stroke-width="2.4"/>
<circle cx="2370" cy="973" r="6" fill="#6a6a6a" stroke="#535353" stroke-width="2"/><circle cx="2370" cy="973" r="6" fill="none" stroke="#e0e0e0" stroke-width="1.8"/>
<circle cx="2407.5" cy="957" r="8.5" fill="#8a8a8a"/><circle cx="2400" cy="969" r="8.5" fill="#cfcfcf" fill-opacity=".9"/><circle cx="2415" cy="969" r="8.5" fill="#b8b8b8" fill-opacity=".85"/>
<path d="M2407.5 962L2411 968L2407.5 972L2404 968Z" fill="#444"/>
<rect x="2441" y="951" width="30" height="24" fill="#e0e0e0"/>
<g fill="#777"><rect x="2443" y="953" width="8" height="5"/><rect x="2453" y="953" width="7" height="5" fill="#888"/><rect x="2462" y="953" width="7" height="5" fill="#666"/>
<rect x="2443" y="960" width="8" height="6" fill="#888"/><rect x="2453" y="960" width="7" height="6" fill="#555"/><rect x="2462" y="960" width="7" height="6" fill="#4a4a4a"/>
<rect x="2443" y="968" width="8" height="5" fill="#3f3f3f"/><rect x="2453" y="968" width="7" height="5" fill="#3a3a3a"/><rect x="2462" y="968" width="7" height="5" fill="#333"/></g>
<rect x="2224" y="1005" width="30" height="24" fill="#e0e0e0" stroke="#e0e0e0" stroke-width="2"/>
<clipPath id="cUL"><path d="M2225 1006H2253L2225 1028Z"/></clipPath><clipPath id="cLR"><path d="M2253 1006V1028H2225Z"/></clipPath>
<path d="M2225 1006H2253L2225 1028Z" fill="#535353"/>
<g clip-path="url(#cUL)"><ellipse cx="2239" cy="1017" rx="8.5" ry="6.5" fill="#e0e0e0" transform="rotate(-38 2239 1017)"/></g>
<g clip-path="url(#cLR)"><ellipse cx="2239" cy="1017" rx="8.5" ry="6.5" fill="#535353" transform="rotate(-38 2239 1017)"/></g>
<rect x="2273" y="1005" width="30" height="24" fill="#9a9a9a" stroke="#e0e0e0" stroke-width="2"/>
<path d="M2274 1018L2288 1006H2295L2274 1024Z M2281 1028L2302 1011V1018L2290 1028Z" fill="#e0e0e0"/>
<path d="M2274 1013L2282 1006H2286L2274 1016Z M2296 1028L2302 1023V1028Z" fill="#555"/>
<rect x="2321" y="1004" width="30" height="24" fill="#e0e0e0"/>
<path d="M2323 1023V1018H2328V1013H2334V1009H2340V1006H2349V1011H2343V1014H2338V1018H2333V1022H2328V1026H2323Z M2335 1026V1022H2340V1019H2345V1016H2349V1026Z" fill="#535353"/>
<path d="M2323 1023V1018H2328V1013H2334V1009H2340V1006H2349" fill="none" stroke="#535353" stroke-width="0"/>
<rect x="2369" y="1005" width="30" height="24" fill="#e0e0e0"/>
<path d="M2371 1007L2384 1017L2371 1027Z" fill="#777"/><path d="M2397 1007L2384 1017L2397 1027Z" fill="#777"/>
<path d="M2371 1027L2384 1017L2397 1027Z" fill="#9c9c9c"/>
<rect x="2417" y="1005" width="30" height="24" fill="url(#gG)" stroke="#e0e0e0" stroke-width="2"/>
</svg>

<!-- ===== layers ===== -->
<div class="sep" style="left:2232px;top:1100px;width:1px;height:56px;background:#393939"></div>
<div class="sep" style="left:2363px;top:1100px;width:1px;height:56px;background:#393939"></div>
<div class="sep" style="left:2457px;top:1100px;width:1px;height:56px;background:#393939"></div>
<div class="t b" style="left:2147px;top:1113px;font-size:21.5px;color:#f7f7f7">Layers</div>
<div class="t b" style="left:2250px;top:1113px;font-size:21.5px;color:#b9b9b9">Channels</div>
<div class="t b" style="left:2382px;top:1113px;font-size:21.5px;color:#b9b9b9">Paths</div>
<div class="ham" style="left:2570px;top:1120px;width:21px;height:16px;background:repeating-linear-gradient(#d6d6d6 0 2px,transparent 2px 4.6px)"></div>
<div class="dd" style="left:2135px;top:1175px;width:175px;height:36px"></div>
<svg class="a" style="left:2152px;top:1183px" width="20" height="20" viewBox="0 0 20 20"><circle cx="8" cy="8" r="6" fill="none" stroke="#e6e6e6" stroke-width="2.2"/><path d="M12.5 12.5L18 18" stroke="#e6e6e6" stroke-width="2.6" stroke-linecap="round"/></svg>
<div class="t" style="left:2178px;top:1178px;color:#ececec">Kind</div>
<div class="chev" style="left:2290px;top:1188px;width:9px;height:9px;border-width:2px"></div>
<svg class="a" style="left:2330px;top:1176px" width="270" height="36" viewBox="2330 1176 270 36">
<rect x="2335" y="1184" width="23" height="18" fill="none" stroke="#e0e0e0" stroke-width="2"/>
<path d="M2338 1199L2344 1191L2348 1195L2351 1192L2355 1199Z" fill="#e0e0e0"/>
<circle cx="2394" cy="1193" r="9.5" fill="none" stroke="#e0e0e0" stroke-width="2.2"/>
<path d="M2400.7 1186.3A9.5 9.5 0 0 1 2387.3 1199.7Z" fill="#e0e0e0"/>
<path d="M2432 1184H2452V1190H2450V1187H2444V1201H2447V1203H2437V1201H2440V1187H2434V1190H2432Z" fill="#e0e0e0"/>
<rect x="2483" y="1186" width="16" height="15" fill="none" stroke="#e0e0e0" stroke-width="2"/>
<g fill="#e0e0e0"><rect x="2480" y="1183" width="6" height="6"/><rect x="2496" y="1183" width="6" height="6"/><rect x="2480" y="1198" width="6" height="6"/><rect x="2496" y="1198" width="6" height="6"/></g>
<path d="M2537 1184H2545L2550 1189V1202H2537Z" fill="none" stroke="#e0e0e0" stroke-width="2"/>
<rect x="2531" y="1193" width="10" height="10" fill="#e0e0e0"/>
<rect x="2576" y="1178" width="18" height="33" rx="9" fill="none" stroke="#444" stroke-width="1.6"/>
<circle cx="2585" cy="1185" r="8" fill="#e8e8e8"/>
</svg>
<div class="sep" style="left:2128px;top:1220px;width:473px;height:2px;background:#454545"></div>
<div class="dd" style="left:2135px;top:1231px;width:262px;height:36px"></div>
<div class="t" style="left:2150px;top:1234px;color:#ececec">Normal</div>
<div class="chev" style="left:2378px;top:1244px;width:9px;height:9px;border-width:2px"></div>
<div class="t" style="left:2404px;top:1234px;color:#d8d8d8">Opacity:</div>
<div class="dd" style="left:2490px;top:1231px;width:101px;height:36px"></div>
<div class="sep" style="left:2562px;top:1233px;width:2px;height:32px;background:#5a5a5a"></div>
<div class="t" style="left:2497px;top:1234px;color:#ececec">100%</div>
<div class="chev" style="left:2572px;top:1245px;width:9px;height:9px;border-width:2px"></div>
<div class="sep" style="left:2128px;top:1275px;width:473px;height:2px;background:#454545"></div>
<div class="t" style="left:2138px;top:1290px;color:#d8d8d8">Lock:</div>
<svg class="a" style="left:2195px;top:1288px" width="210" height="36" viewBox="2195 1288 210 36">
<rect x="2203" y="1294" width="22" height="22" fill="none" stroke="#e0e0e0" stroke-width="2"/>
<g fill="#e0e0e0"><rect x="2204" y="1295" width="7" height="7"/><rect x="2217" y="1295" width="7" height="7"/><rect x="2210.5" y="1301.5" width="7" height="7"/><rect x="2204" y="1308" width="7" height="7"/><rect x="2217" y="1308" width="7" height="7"/></g>
<path d="M2270.5 1294.5L2262 1305" stroke="#e0e0e0" stroke-width="4.6" stroke-linecap="round"/>
<path d="M2261 1305c-4-1-8 1-9 5c-1 3-2 5-4 7c6 1 11-1 13-5c1-2 1-5 0-7z" fill="#e0e0e0"/>
<path d="M2301 1294V1318M2289 1306H2313" stroke="#e0e0e0" stroke-width="2.4"/>
<path d="M2296 1298L2301 1292L2306 1298Z M2296 1314L2301 1320L2306 1314Z M2293 1301L2287 1306L2293 1311Z M2309 1301L2315 1306L2309 1311Z" fill="#e0e0e0"/>
<path d="M2334 1298H2350L2356 1304V1314H2334Z" fill="none" stroke="#e0e0e0" stroke-width="2"/>
<g fill="#e0e0e0"><rect x="2332" y="1293" width="3" height="3"/><rect x="2356" y="1293" width="3" height="3"/><rect x="2332" y="1317" width="3" height="3"/><rect x="2356" y="1317" width="3" height="3"/></g>
<path d="M2383 1302V1298A7 7 0 0 1 2397 1298V1302" fill="none" stroke="#e0e0e0" stroke-width="2.6"/>
<rect x="2380" y="1302" width="20" height="15" rx="1.5" fill="#e0e0e0"/><circle cx="2390" cy="1309" r="2.4" fill="#535353"/>
</svg>
<div class="t" style="left:2443px;top:1290px;width:40px;text-align:right;color:#d8d8d8">Fill:</div>
<div class="dd" style="left:2490px;top:1287px;width:101px;height:35px"></div>
<div class="sep" style="left:2562px;top:1289px;width:2px;height:31px;background:#5a5a5a"></div>
<div class="t" style="left:2497px;top:1290px;color:#ececec">100%</div>
<div class="chev" style="left:2572px;top:1300px;width:9px;height:9px;border-width:2px"></div>

<!-- layer rows -->
<div class="a" style="left:2128px;top:1336px;width:441px;height:1px;background:#4a4a4a"></div>
<div class="a" style="left:2189px;top:1337px;width:380px;height:81px;background:#6a6a6a"></div>
<div class="a" style="left:2187px;top:1337px;width:2px;height:164px;background:#4a4a4a"></div>
<div class="a" style="left:2128px;top:1418px;width:441px;height:2px;background:#474747"></div>
<div class="a" style="left:2128px;top:1500px;width:441px;height:2px;background:#474747"></div>
<svg class="a" style="left:2145px;top:1370px" width="26" height="17" viewBox="0 0 26 17"><path d="M0.5 8.5C4.5 2.5 8.5 0.5 13 0.5C17.5 0.5 21.5 2.5 25.5 8.5C21.5 14.5 17.5 16.5 13 16.5C8.5 16.5 4.5 14.5 0.5 8.5Z" fill="#dedede"/><circle cx="13" cy="8.5" r="5" fill="#535353"/><circle cx="13" cy="8.5" r="3.2" fill="#dedede"/><circle cx="12" cy="7.5" r="1.3" fill="#535353"/></svg>
<svg class="a" style="left:2145px;top:1452px" width="26" height="17" viewBox="0 0 26 17"><path d="M0.5 8.5C4.5 2.5 8.5 0.5 13 0.5C17.5 0.5 21.5 2.5 25.5 8.5C21.5 14.5 17.5 16.5 13 16.5C8.5 16.5 4.5 14.5 0.5 8.5Z" fill="#dedede"/><circle cx="13" cy="8.5" r="5" fill="#535353"/><circle cx="13" cy="8.5" r="3.2" fill="#dedede"/><circle cx="12" cy="7.5" r="1.3" fill="#535353"/></svg>
<div class="a" style="left:2196px;top:1346px;width:64px;height:64px;background:#a44f2d;border:3px solid #3a3a3a"></div>
<svg class="a" style="left:2191px;top:1341px" width="75" height="75" viewBox="0 0 75 75"><path d="M2 25V2H26M49 2H73V25M73 50V73H49M26 73H2V50" fill="none" stroke="#ffffff" stroke-width="2.6"/></svg>
<div class="t" style="left:2277px;top:1363px;color:#f2f2f2">Layer 1</div>
<div class="a" style="left:2196px;top:1428px;width:64px;height:64px;background:#e83828;border:2px solid #3a3a3a"></div>
<div class="t" style="left:2277px;top:1445px;color:#eaeaea">Background</div>
<svg class="a" style="left:2514px;top:1447px" width="24" height="28" viewBox="0 0 24 28"><path d="M5 12V8A7 7 0 0 1 19 8V12" fill="none" stroke="#dedede" stroke-width="2.2"/><rect x="2" y="12" width="20" height="15" rx="1.5" fill="none" stroke="#dedede" stroke-width="2.2"/><circle cx="12" cy="19.5" r="2" fill="#dedede"/></svg>

<!-- layers footer -->
<svg class="a" style="left:2190px;top:2656px" width="370" height="44" viewBox="2190 2656 370 44">
<g fill="none" stroke="#8e8e8e" stroke-width="2.6"><rect x="2195" y="2670" width="14" height="12" rx="6"/><rect x="2207" y="2670" width="14" height="12" rx="6"/></g>
<path d="M2201 2676H2215" stroke="#8e8e8e" stroke-width="2.6"/>
<text x="2250" y="2687" font-family="Liberation Sans" font-style="italic" font-size="26" fill="#d8d8d8">fx</text>
<path d="M2271 2692H2278L2274.5 2695Z" fill="#d8d8d8"/>
<rect x="2306" y="2665" width="23" height="19" fill="#d8d8d8"/><circle cx="2317.5" cy="2674.5" r="5.5" fill="#535353"/>
<circle cx="2371" cy="2675" r="10" fill="none" stroke="#d8d8d8" stroke-width="2.2"/>
<path d="M2378 2668A10 10 0 0 1 2364 2682Z" fill="#d8d8d8"/>
<path d="M2382 2692H2389L2385.5 2695Z" fill="#d8d8d8"/>
<path d="M2413 2668H2423L2425 2670H2437V2685H2413Z" fill="#d8d8d8"/>
<rect x="2469" y="2665" width="22" height="21" fill="none" stroke="#d8d8d8" stroke-width="2.2"/>
<path d="M2480 2670V2681M2474.5 2675.5H2485.5" stroke="#d8d8d8" stroke-width="2.2"/>
<rect x="2522" y="2667" width="22" height="3" fill="#d8d8d8"/><rect x="2529" y="2664" width="8" height="3" fill="#d8d8d8"/>
<path d="M2524 2671H2542L2541 2689H2525Z" fill="none" stroke="#d8d8d8" stroke-width="2.2"/>
<path d="M2529.5 2674V2686M2533 2674V2686M2536.5 2674V2686" stroke="#d8d8d8" stroke-width="1.6"/>
</svg>

<div id="content"></div>

<!-- dialog -->
<div id="dlg" class="a" style="left:1510px;top:1521px;width:1046px;height:311px;border-radius:10px;background:#535353;box-shadow:0 10px 50px rgba(0,0,0,.5),0 0 0 1px rgba(30,30,30,.5);overflow:hidden">
<div class="a" style="left:0;top:0;width:1046px;height:44px;background:linear-gradient(#d3d3d3,#bdbdbd);border-top:1px solid #e6e6e6"></div>
<div class="t" style="left:0;top:7px;width:1046px;text-align:center;font-size:26px;color:#262626">Assign Profile</div>
<div class="a" style="left:23px;top:80px;width:821px;height:209px;border:2px solid #464646"></div>
<div class="a" style="left:51px;top:64px;width:179px;height:34px;background:#535353"></div>
<div class="t" style="left:61px;top:65px;font-size:25px;color:#ededed;height:30px;line-height:30px">Assign Profile:</div>
<div class="a" style="left:42px;top:122px;width:27px;height:27px;border-radius:50%;background:#4b4b4b;border:2px solid #858585"></div>
<div class="a" style="left:42px;top:180px;width:27px;height:27px;border-radius:50%;background:#e4e4e4"></div>
<div class="a" style="left:50px;top:188px;width:11px;height:11px;border-radius:50%;background:#2a2a2a"></div>
<div class="a" style="left:42px;top:235px;width:27px;height:27px;border-radius:50%;background:#4b4b4b;border:2px solid #858585"></div>
<div class="t" style="left:77px;top:120px;font-size:25px;color:#efefef">Don’t Color Manage This Document</div>
<div class="t" style="left:77px;top:178px;font-size:25px;color:#efefef;white-space:pre">Working RGB:  ProPhoto RGB</div>
<div class="t" style="left:77px;top:233px;font-size:25px;color:#efefef">Profile:</div>
<div class="a" style="left:194px;top:227px;width:630px;height:40px;background:#464646;border:2px solid #626262;border-radius:5px"></div>
<div class="t" style="left:209px;top:232px;font-size:24.5px;color:#efefef">sRGB IEC61966-2.1</div>
<div class="chev" style="left:804px;top:241px;width:11px;height:11px;border-width:2px"></div>
<div class="a" style="left:876px;top:78px;width:150px;height:52px;border:2.5px solid #f2f2f2;border-radius:26px"></div>
<div class="t" style="left:876px;top:89px;width:150px;text-align:center;font-size:24px;color:#f4f4f4">OK</div>
<div class="a" style="left:876px;top:148px;width:150px;height:52px;border:2px solid #7e7e7e;border-radius:26px"></div>
<div class="t" style="left:876px;top:159px;width:150px;text-align:center;font-size:24.5px;color:#f4f4f4">Cancel</div>
<div class="a" style="left:875px;top:238px;width:24px;height:24px;background:#dedede;border-radius:4px"></div>
<svg class="a" style="left:877px;top:241px" width="20" height="18" viewBox="0 0 20 18"><path d="M4 9L8 13.5L16 4" fill="none" stroke="#2e2e2e" stroke-width="3.2"/></svg>
<div class="t" style="left:910px;top:235px;font-size:24.5px;color:#efefef">Preview</div>
</div>

</div>
</div>
</body></html>
